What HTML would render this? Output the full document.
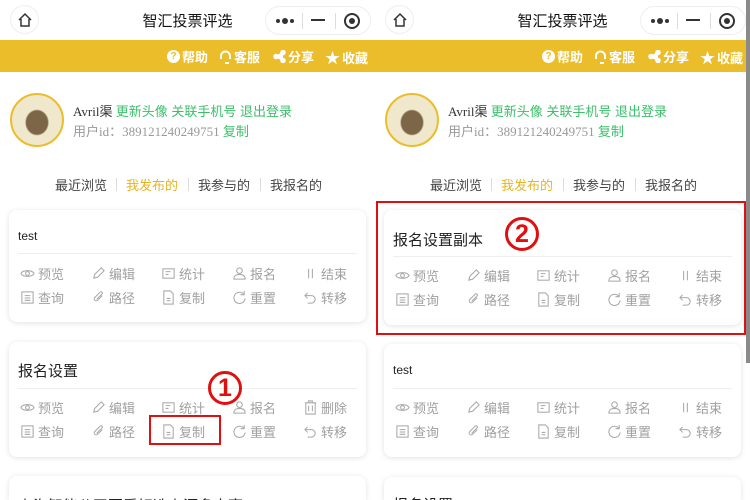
<!DOCTYPE html>
<html><head><meta charset="utf-8"><style>
*{margin:0;padding:0;box-sizing:border-box}
html,body{width:750px;height:500px;overflow:hidden}
body{background:#fff;font-family:"Liberation Sans","Noto Sans CJK SC",sans-serif;position:relative}
.p{position:absolute;top:0;width:375px;height:500px;overflow:hidden;background:#fff}
.a{position:absolute}
.nav{top:0;left:0;width:375px;height:40px;background:#fff}
.home{left:10px;top:5px;width:29px;height:29px;border-radius:50%;border:1px solid #eee;display:flex;align-items:center;justify-content:center}
.title{left:0;width:375px;top:10px;text-align:center;font-size:15px;color:#111}
.cap{left:265px;top:6px;width:106px;height:29px;border-radius:15px;border:1px solid #eee}
.bar{top:40px;left:0;width:375px;height:32px;background:#ecbd2a}
.bi{top:47px;color:#fff;font-size:13px;font-weight:bold;display:flex;align-items:center;gap:2px}
.av{left:10px;top:93px;width:54px;height:54px;border-radius:50%;border:2px solid #ecbd2a;background:radial-gradient(ellipse at 50% 55%,#7d6548 0 30%,#efe8cc 34%)}
.l1{left:73px;top:101px;font-size:13px;color:#333;font-family:"Liberation Serif","Noto Sans CJK SC",serif}
.g{color:#3bbf6a;font-family:"Liberation Sans","Noto Sans CJK SC",sans-serif}
.l2{left:73px;top:121px;font-size:13px;color:#999;font-family:"Liberation Serif","Noto Sans CJK SC",serif}
.tab{top:175px;font-size:13px;color:#444}
.sep{top:178px;width:1px;height:13px;background:#ddd}
.card{left:9px;width:357px;background:#fff;border-radius:8px;box-shadow:0 1px 6px rgba(0,0,0,.12)}
.ct{left:18px;color:#222}
.dv{left:18px;width:339px;height:1px;background:#eee}
.it{font-size:13px;color:#a0a0a0;display:flex;align-items:center;gap:3px}
.it svg{width:15px;height:15px}
.red{border:2px solid #e01010}
.num{width:34px;height:34px;border-radius:50%;border:3px solid #e01010;color:#e01010;font-weight:bold;font-size:25px;text-align:center;line-height:28px}
</style></head><body>

<svg width="0" height="0" style="position:absolute">
<defs>
<g id="ico" fill="none" stroke="#a8a8a8" stroke-width="1.1"></g>
<symbol id="eye" viewBox="0 0 16 16"><g fill="none" stroke="#a8a8a8" stroke-width="1.1"><path d="M1 8c2-4 12-4 14 0c-2 4-12 4-14 0z"/><circle cx="8" cy="8" r="2"/></g></symbol>
<symbol id="pen" viewBox="0 0 16 16"><g fill="none" stroke="#a8a8a8" stroke-width="1.1"><path d="M3 13l1-4 7-7 3 3-7 7z"/></g></symbol>
<symbol id="stat" viewBox="0 0 16 16"><g fill="none" stroke="#a8a8a8" stroke-width="1.1"><rect x="2" y="3" width="12" height="10"/><path d="M5 6h5M5 9h3"/></g></symbol>
<symbol id="user" viewBox="0 0 16 16"><g fill="none" stroke="#a8a8a8" stroke-width="1.1"><circle cx="8" cy="5" r="3"/><path d="M2 14c0-4 3-5 6-5s6 1 6 5z"/></g></symbol>
<symbol id="pause" viewBox="0 0 16 16"><g fill="none" stroke="#a8a8a8" stroke-width="1.1"><path d="M6 3v10M10 3v10"/></g></symbol>
<symbol id="list" viewBox="0 0 16 16"><g fill="none" stroke="#a8a8a8" stroke-width="1.1"><rect x="2" y="2" width="12" height="12"/><path d="M5 6h6M5 8.5h6M5 11h6"/></g></symbol>
<symbol id="clip" viewBox="0 0 16 16"><g fill="none" stroke="#a8a8a8" stroke-width="1.1"><path d="M12 6l-5 5a2 2 0 01-3-3l6-6a1.5 1.5 0 012 2l-6 6"/></g></symbol>
<symbol id="doc" viewBox="0 0 16 16"><g fill="none" stroke="#a8a8a8" stroke-width="1.1"><path d="M3 1h7l3 3v11H3z"/><path d="M6 9h4M6 11.5h4"/></g></symbol>
<symbol id="reset" viewBox="0 0 16 16"><g fill="none" stroke="#a8a8a8" stroke-width="1.1"><path d="M13 5a6 6 0 10 1 4"/><path d="M13 1v4h-4"/></g></symbol>
<symbol id="back" viewBox="0 0 16 16"><g fill="none" stroke="#a8a8a8" stroke-width="1.1"><path d="M5 3L2 6l3 3"/><path d="M2 6h7a4 4 0 010 8H5"/></g></symbol>
<symbol id="trash" viewBox="0 0 16 16"><g fill="none" stroke="#a8a8a8" stroke-width="1.1"><path d="M2 3h12M6 3V1h4v2M3 3v12h10V3M6 6v6M10 6v6"/></g></symbol>
</defs></svg>

<div class="p" style="left:0">
 <div class="a nav"></div>
 <div class="a home"><svg width="16" height="16" viewBox="0 0 16 16" fill="none" stroke="#333" stroke-width="1.5"><path d="M2 8L8 2l6 6M4 7v7h8V7"/></svg></div>
 <div class="a title">智汇投票评选</div>
 <div class="a cap"><span class="a" style="left:10px;top:12px;width:4px;height:4px;border-radius:50%;background:#333"></span><span class="a" style="left:16px;top:11px;width:6px;height:6px;border-radius:50%;background:#333"></span><span class="a" style="left:24px;top:12px;width:4px;height:4px;border-radius:50%;background:#333"></span><span class="a" style="left:36px;top:6px;width:1px;height:16px;background:#ddd"></span><span class="a" style="left:45px;top:12px;width:14px;height:2px;background:#333"></span><span class="a" style="left:69px;top:6px;width:1px;height:16px;background:#ddd"></span><span class="a" style="left:78px;top:6px;width:16px;height:16px;border:2px solid #333;border-radius:50%"></span><span class="a" style="left:83px;top:11px;width:6px;height:6px;background:#333;border-radius:50%"></span></div>
 <div class="a bar"></div>
 <div class="a bi" style="left:167px"><span style="width:13px;height:13px;border-radius:50%;background:#fff;color:#ecbd2a;font-size:10px;text-align:center;line-height:13px">?</span>帮助</div>
 <div class="a bi" style="left:219px"><svg width="13" height="14" viewBox="0 0 13 14" fill="none" stroke="#fff" stroke-width="2"><path d="M2 9V6a4.5 4.5 0 019 0v3M6 13h4"/></svg>客服</div>
 <div class="a bi" style="left:273px"><svg width="13" height="13" viewBox="0 0 13 13" fill="#fff" stroke="#fff" stroke-width="1.5"><circle cx="10" cy="2.5" r="2"/><circle cx="3" cy="6.5" r="2"/><circle cx="10" cy="10.5" r="2"/><path d="M10 2.5L3 6.5l7 4"/></svg>分享</div>
 <div class="a bi" style="left:325px"><span style="font-size:15px">★</span>收藏</div>
 <div class="a av"></div>
 <div class="a l1">Avril渠 <span class="g">更新头像 关联手机号 退出登录</span></div>
 <div class="a l2">用户id：389121240249751 <span class="g">复制</span></div>
 <div class="a tab" style="left:55px">最近浏览</div><div class="a sep" style="left:116px"></div>
 <div class="a tab" style="left:126px;color:#e6b422">我发布的</div><div class="a sep" style="left:188px"></div>
 <div class="a tab" style="left:198px">我参与的</div><div class="a sep" style="left:260px"></div>
 <div class="a tab" style="left:270px">我报名的</div>

 <div class="a card" style="top:210px;height:112px"></div>
 <div class="a ct" style="top:229px;font-size:12px">test</div>
 <div class="a dv" style="top:253px"></div>
 <div class="a card" style="top:342px;height:115px"></div>
 <div class="a ct" style="top:360px;font-size:15px">报名设置</div>
 <div class="a dv" style="top:388px"></div>
 <div class="a card" style="top:476px;height:24px;border-radius:8px 8px 0 0"></div>
 <div class="a ct" style="top:495px;font-size:15px;height:5px;overflow:hidden">上海智能公司要看好选上源多大赛</div>
</div>

<div class="p" style="left:375px">
 <div class="a nav"></div>
 <div class="a home"><svg width="16" height="16" viewBox="0 0 16 16" fill="none" stroke="#333" stroke-width="1.5"><path d="M2 8L8 2l6 6M4 7v7h8V7"/></svg></div>
 <div class="a title">智汇投票评选</div>
 <div class="a cap"><span class="a" style="left:10px;top:12px;width:4px;height:4px;border-radius:50%;background:#333"></span><span class="a" style="left:16px;top:11px;width:6px;height:6px;border-radius:50%;background:#333"></span><span class="a" style="left:24px;top:12px;width:4px;height:4px;border-radius:50%;background:#333"></span><span class="a" style="left:36px;top:6px;width:1px;height:16px;background:#ddd"></span><span class="a" style="left:45px;top:12px;width:14px;height:2px;background:#333"></span><span class="a" style="left:69px;top:6px;width:1px;height:16px;background:#ddd"></span><span class="a" style="left:78px;top:6px;width:16px;height:16px;border:2px solid #333;border-radius:50%"></span><span class="a" style="left:83px;top:11px;width:6px;height:6px;background:#333;border-radius:50%"></span></div>
 <div class="a bar"></div>
 <div class="a bi" style="left:167px"><span style="width:13px;height:13px;border-radius:50%;background:#fff;color:#ecbd2a;font-size:10px;text-align:center;line-height:13px">?</span>帮助</div>
 <div class="a bi" style="left:219px"><svg width="13" height="14" viewBox="0 0 13 14" fill="none" stroke="#fff" stroke-width="2"><path d="M2 9V6a4.5 4.5 0 019 0v3M6 13h4"/></svg>客服</div>
 <div class="a bi" style="left:273px"><svg width="13" height="13" viewBox="0 0 13 13" fill="#fff" stroke="#fff" stroke-width="1.5"><circle cx="10" cy="2.5" r="2"/><circle cx="3" cy="6.5" r="2"/><circle cx="10" cy="10.5" r="2"/><path d="M10 2.5L3 6.5l7 4"/></svg>分享</div>
 <div class="a bi" style="left:325px"><span style="font-size:15px">★</span>收藏</div>
 <div class="a av"></div>
 <div class="a l1">Avril渠 <span class="g">更新头像 关联手机号 退出登录</span></div>
 <div class="a l2">用户id：389121240249751 <span class="g">复制</span></div>
 <div class="a tab" style="left:55px">最近浏览</div><div class="a sep" style="left:116px"></div>
 <div class="a tab" style="left:126px;color:#e6b422">我发布的</div><div class="a sep" style="left:188px"></div>
 <div class="a tab" style="left:198px">我参与的</div><div class="a sep" style="left:260px"></div>
 <div class="a tab" style="left:270px">我报名的</div>

 <div class="a card" style="top:210px;height:115px"></div>
 <div class="a ct" style="top:229px;font-size:15px">报名设置副本</div>
 <div class="a dv" style="top:256px"></div>
 <div class="a card" style="top:344px;height:113px"></div>
 <div class="a ct" style="top:363px;font-size:12px">test</div>
 <div class="a dv" style="top:388px"></div>
 <div class="a card" style="top:477px;height:23px;border-radius:8px 8px 0 0"></div>
 <div class="a ct" style="top:494px;font-size:15px;height:6px;overflow:hidden">报名设置</div>
</div>

<div id="items"></div>
<script>
var cols=[20,91,161,232,303];
var r1=[["eye","预览"],["pen","编辑"],["stat","统计"],["user","报名"],["pause","结束"]];
var r2=[["list","查询"],["clip","路径"],["doc","复制"],["reset","重置"],["back","转移"]];
var r1d=r1.slice(0,4).concat([["trash","删除"]]);
function row(ox,y,arr){var h="";arr.forEach(function(a,i){h+='<div class="a it" style="left:'+(ox+cols[i])+'px;top:'+(y-9)+'px"><svg viewBox="0 0 16 16"><use href="#'+a[0]+'"/></svg>'+a[1]+'</div>';});return h;}
var h="";
h+=row(0,273,r1)+row(0,297,r2)+row(0,407,r1d)+row(0,431,r2);
h+=row(375,275,r1)+row(375,299,r2)+row(375,407,r1)+row(375,431,r2);
document.getElementById("items").innerHTML=h;
</script>

<div class="a red" style="left:149px;top:415px;width:72px;height:30px"></div>
<div class="a num" style="left:208px;top:371px">1</div>
<div class="a red" style="left:376px;top:201px;width:370px;height:134px"></div>
<div class="a num" style="left:505px;top:217px">2</div>
<div class="a" style="left:746px;top:0;width:4px;height:363px;background:#8a8a8a"></div>
</body></html>
